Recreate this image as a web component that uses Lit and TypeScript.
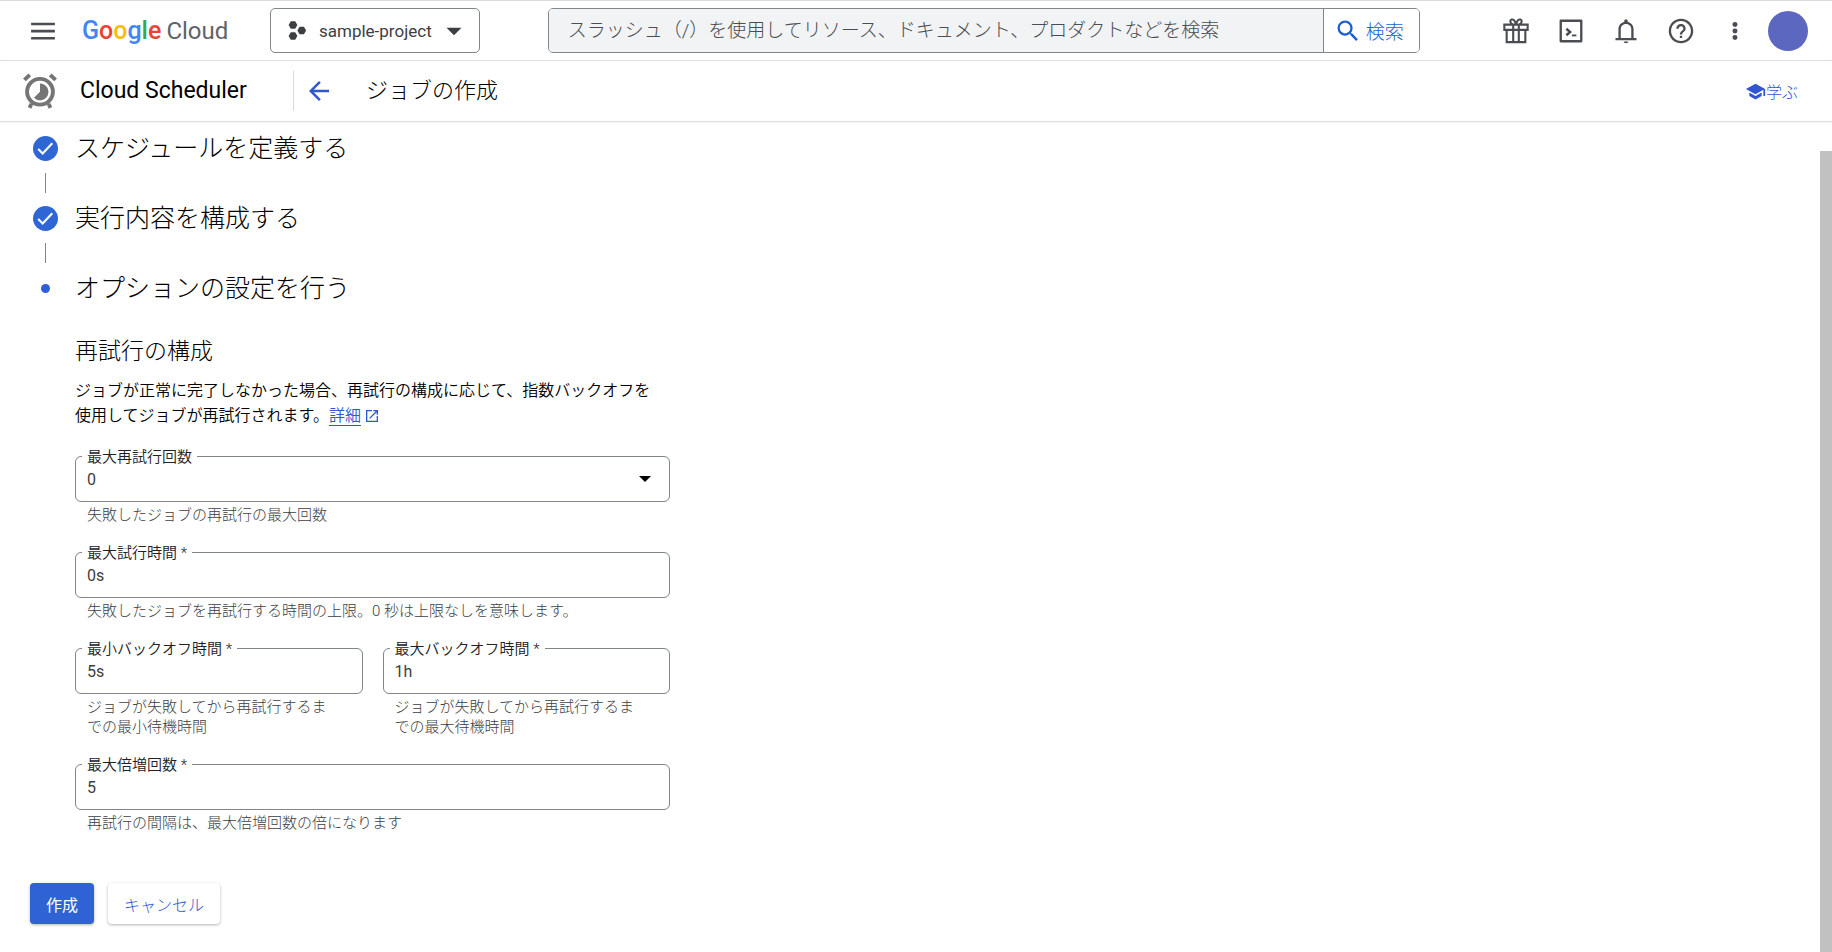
import { LitElement, html, css, svg, nothing } from "lit";
import { customElement, property } from "lit/decorators.js";

const icons = {
  menu: svg`<path d="M2.500 18.800h19v-2.100h-19zm0-5.700h19V11h-19zm0-7.800v2.100h19V5.300z"/>`,
  project: svg`<path d="M5.500 1.500h5l2.500 4.300-2.500 4.200h-5L3 5.800zM5.500 14h5l2.500 4.300-2.500 4.200h-5L3 18.300zM15.500 7.700h5l2.500 4.300-2.500 4.300h-5L13 12z"/>`,
  caret: svg`<path d="M3 8l9 9 9-9z"/>`,
  search: svg`<path d="M15.500 14h-.79l-.28-.27A6.470 6.470 0 0 0 16 9.500 6.500 6.500 0 1 0 9.500 16c1.610 0 3.090-.59 4.230-1.570l.27.28v.79l5 4.990L20.490 19l-4.990-5zm-6 0C7.010 14 5 11.990 5 9.500S7.010 5 9.500 5 14 7.010 14 9.500 11.990 14 9.500 14z"/>`,
  gift: svg`<path fill="none" stroke="currentColor" stroke-width="1.800" d="M2 6.500h20v4.500H2zM4 11v10.500h16V11M9.600 6.500v15M14.400 6.500v15M12 6C11 3 9.500 1.800 8.200 2.200 6.500 2.800 7 5.500 9 6.200M12 6c1-3 2.500-4.200 3.800-3.800C17.500 2.800 17 5.500 15 6.200"/>`,
  shell: svg`<path fill="none" stroke="currentColor" stroke-width="2" stroke-linejoin="round" d="M3.200 3.200h17.600v17.600H3.200z"/><path fill="none" stroke="currentColor" stroke-width="2.200" d="M8 10l3.200 2.800L8 15.600"/><path fill="none" stroke="currentColor" stroke-width="1.600" d="M12.800 15.800h3.800"/>`,
  bell: svg`<path d="M12 22.500c1.100 0 2-.7 2-1.500h-4c0 .8.900 1.500 2 1.500zM18.500 18v-7.500c0-3.200-1.900-5.700-5-6.300V3.500C13.500 2.700 12.800 2 12 2s-1.500.7-1.500 1.500v.7c-3.100.6-5 3.100-5 6.300V18H3v2h18v-2zm-2 0h-9v-7.500C7.500 8 9.200 6 12 6s4.500 2 4.500 4.500z"/>`,
  help: svg`<path d="M11 18h2v-2h-2v2zm1-16.500C6.200 1.500 1.500 6.200 1.500 12S6.200 22.500 12 22.500 22.500 17.800 22.500 12 17.800 1.500 12 1.500zm0 19c-4.700 0-8.500-3.800-8.500-8.500S7.300 3.500 12 3.500s8.500 3.800 8.500 8.500-3.800 8.500-8.500 8.500zM12 6c-2.210 0-4 1.790-4 4h2c0-1.100.9-2 2-2s2 .9 2 2c0 2-3 1.750-3 5h2c0-2.250 3-2.500 3-5 0-2.210-1.790-4-4-4z"/>`,
  more: svg`<circle cx="12" cy="6" r="2.300"/><circle cx="12" cy="12" r="2.300"/><circle cx="12" cy="18" r="2.300"/>`,
  back: svg`<path d="M20 11H7.830l5.590-5.590L12 4l-8 8 8 8 1.410-1.410L7.830 13H20v-2z"/>`,
  school: svg`<path d="M5 13.180v4L12 21l7-3.820v-4L12 17l-7-3.820zM12 3L1 9l11 6 9-4.910V17h2V9L12 3z"/>`,
  scheduler: svg`<g fill="none" stroke="currentColor"><circle cx="12" cy="12.500" r="8.600" stroke-width="2.600"/><path stroke-width="2.600" d="M1.600 4.600L5.200 1.200M22.400 4.600L18.800 1.200M6.300 20.500l-1.300 2.700M17.700 20.500l1.300 2.700"/></g><path d="M12 7v5.500l-4 4A5.600 5.600 0 1 0 12 7z"/>`,
  check: svg`<circle cx="12" cy="12" r="12"/><path fill="none" stroke="#fff" stroke-width="2" d="M5 12.500l4.300 4.300L18.500 7"/>`,
  external: svg`<path d="M19 19H5V5h7V3H3v18h18v-9h-2v7zM14 3v2h3.590l-9.830 9.830 1.410 1.410L19 6.410V10h2V3h-7z"/>`,
};

const icon = (name: keyof typeof icons) =>
  html`<svg class="icon ${name}" viewBox="0 0 24 24" aria-hidden="true">${icons[name]}</svg>`;

const base = css`
  *, *::before, *::after { box-sizing: border-box; }
  .icon { display: block; flex: none; width: 24px; height: 24px; fill: currentColor; }
  button, input, select { font: inherit; color: inherit; margin: 0; }
  button { cursor: pointer; }
`;

@customElement("form-field")
class FormField extends LitElement {
  @property() label = "";
  @property() value = "";
  @property() hint = "";
  @property({ type: Boolean }) required = false;
  @property({ type: Boolean }) dropdown = false;

  static styles = [base, css`
    :host { display: block; min-width: 0; }
    .box { position: relative; display: flex; align-items: center; height: 46px; border: 1px solid #80868b; border-radius: 6px; }
    .label { position: absolute; top: -9px; left: 6px; padding: 0 5px; background: #fff; font-size: 15px; line-height: 18px; font-weight: 350; color: #202124; }
    .control { width: 100%; height: 100%; padding: 0 11px; border: 0; outline: 0; background: transparent; font-size: 16px; color: #3c4043; appearance: none; }
    .arrow { position: absolute; right: 18px; width: 12px; height: 6px; background: #000; clip-path: polygon(0 0, 100% 0, 50% 100%); pointer-events: none; }
    .hint { margin: 0; padding: 3px 32px 0 12px; font-size: 15px; line-height: 20px; font-weight: 300; color: #3c4043; }
  `];

  render() {
    return html`
      <div class="box">
        <label class="label" for="control">${this.label}${this.required ? " *" : nothing}</label>
        ${this.dropdown
          ? html`<select class="control" id="control" aria-describedby="hint"><option>${this.value}</option></select><span class="arrow"></span>`
          : html`<input class="control" id="control" type="text" aria-describedby="hint" .value=${this.value} ?required=${this.required}>`}
      </div>
      <p class="hint" id="hint">${this.hint}</p>
    `;
  }
}

@customElement("app-root")
class AppRoot extends LitElement {
  static styles = [base, css`
    :host {
      display: flex; flex-direction: column; min-height: 100vh; background: #fff; color: #000;
      font-family: Roboto, "Noto Sans CJK JP", sans-serif; font-size: 16px; font-weight: 400;
    }
    .topbar { display: flex; align-items: center; height: 61px; padding: 0 24px 0 28px; border-top: 1px solid #dadce0; border-bottom: 1px solid #dadce0; color: #4a4d51; }
    .plain { display: flex; padding: 0; border: 0; background: none; }
    .menu { width: 30px; height: 30px; }
    .logo { display: flex; align-items: baseline; gap: 5px; margin-left: 24px; width: 188px; font-size: 24px; line-height: 32px; color: #5f6368; text-decoration: none; }
    .brand { font-size: 25px; font-weight: 500; }
    .blue { color: #4285f4; } .red { color: #ea4335; } .yellow { color: #fbbc04; } .green { color: #34a853; }
    .picker { display: flex; align-items: center; height: 45px; padding: 0 15px; border: 1px solid #80868b; border-radius: 5px; background: #fff; font-size: 17px; color: #3c4043; }
    .project { width: 21px; height: 21px; margin-right: 12px; }
    .caret { width: 20px; height: 20px; margin-left: 12px; }
    .search-form { display: flex; flex: 0 1 872px; height: 45px; margin-left: 68px; border: 1px solid #80868b; border-radius: 5px; overflow: hidden; }
    .query { flex: 1; min-width: 0; padding: 0 19px; border: 0; outline: 0; background: #f1f3f4; font-size: 19px; font-weight: 300; }
    .query::placeholder { color: #4a4d51; opacity: 1; }
    .submit { display: flex; align-items: center; gap: 4px; padding: 0 15px 0 10px; border: 0; border-left: 1px solid #80868b; background: #fff; font-size: 19px; font-weight: 300; color: #1a5fd0; }
    .submit .icon { width: 28px; height: 28px; }
    .tools { display: flex; align-items: center; gap: 27px; margin-left: auto; }
    .tools .icon { width: 28px; height: 28px; }
    .tools .more { width: 26px; height: 26px; }
    .avatar { width: 40px; height: 40px; margin-left: -7px; border: 0; border-radius: 50%; background: #5c67c0; }
    .titlebar { display: flex; align-items: center; height: 61px; padding: 0 34px 0 22px; border-bottom: 1px solid #dadce0; box-shadow: 0 1px 2px #f1f3f4; }
    .scheduler { width: 36px; height: 40px; color: #757575; }
    .product { width: 213px; margin: 0 0 0 22px; font-size: 23px; line-height: 32px; font-weight: 400; }
    .rule { width: 1px; height: 40px; background: #dadce0; }
    .backlink, .learn { color: #3056d0; }
    .backlink { margin: 0 32px 0 10px; }
    .back { width: 30px; height: 30px; }
    .title { margin: 0; font-size: 22px; line-height: 32px; font-weight: 300; }
    .learn { display: flex; align-items: center; margin-left: auto; font-size: 16px; font-weight: 300; text-decoration: none; }
    .school { width: 21px; height: 21px; }
    .body { display: flex; flex: 1; }
    .main { flex: 1; min-width: 0; padding: 9px 30px 28px; }
    .scroll { display: flex; flex-direction: column; width: 12px; padding-top: 29px; }
    .thumb { flex: 1; background: #c1c1c1; }
    .steps { margin: 0; padding: 0; list-style: none; }
    .step { display: grid; grid-template-columns: 30px 1fr; column-gap: 15px; align-items: center; }
    .mark { display: flex; justify-content: center; color: #2f66d6; }
    .check { width: 25px; height: 25px; }
    .dot { width: 9px; height: 9px; border-radius: 50%; background: #2f5fd6; }
    .step-title { margin: 0; padding-top: 2px; font-size: 25px; line-height: 32px; font-weight: 300; }
    .line { justify-self: center; width: 1px; height: 20px; margin: 8px 0; background: #80868b; }
    .options { width: min(100%, 640px); padding: 31px 0 0 45px; }
    .heading { margin: 0; font-size: 23px; line-height: 32px; font-weight: 300; }
    .intro { margin: 10px 0 28px; padding-right: 16px; font-size: 16px; line-height: 25px; font-weight: 350; }
    .more-link { color: #3056d0; text-decoration: underline; text-underline-offset: 4px; text-decoration-thickness: 1px; }
    .more-link .icon { display: inline-block; width: 16px; height: 16px; margin-left: 3px; vertical-align: -3px; }
    .fields { display: grid; grid-template-columns: 1fr 1fr; gap: 27px 20px; }
    .wide { grid-column: 1 / -1; }
    .actions { display: flex; gap: 14px; margin-top: 50px; }
    .button { height: 41px; padding: 0 16px; border: 0; border-radius: 4px; font-size: 16px; box-shadow: 0 1px 3px #0000004d; }
    .primary { background: #2f62d4; color: #fff; }
    .secondary { background: #fff; color: #3056d0; font-weight: 300; }
  `];

  render() {
    return html`
      <header class="topbar">
        <button class="plain" aria-label="メニュー">${icon("menu")}</button>
        <a class="logo" href="#"><span class="brand"><span class="blue">G</span><span class="red">o</span><span class="yellow">o</span><span class="blue">g</span><span class="green">l</span><span class="red">e</span></span><span>Cloud</span></a>
        <button class="picker">${icon("project")}sample-project${icon("caret")}</button>
        <form class="search-form" role="search">
          <input class="query" type="search" aria-label="検索" placeholder="スラッシュ（/）を使用してリソース、ドキュメント、プロダクトなどを検索">
          <button class="submit" type="button">${icon("search")}検索</button>
        </form>
        <div class="tools">
          <button class="plain" aria-label="特典">${icon("gift")}</button>
          <button class="plain" aria-label="Cloud Shell">${icon("shell")}</button>
          <button class="plain" aria-label="通知">${icon("bell")}</button>
          <button class="plain" aria-label="ヘルプ">${icon("help")}</button>
          <button class="plain" aria-label="その他">${icon("more")}</button>
          <button class="avatar" aria-label="アカウント"></button>
        </div>
      </header>
      <div class="titlebar">
        ${icon("scheduler")}
        <h2 class="product">Cloud Scheduler</h2>
        <span class="rule"></span>
        <a class="backlink" href="#" aria-label="戻る">${icon("back")}</a>
        <h1 class="title">ジョブの作成</h1>
        <a class="learn" href="#">${icon("school")}学ぶ</a>
      </div>
      <div class="body">
        <main class="main">
          <ol class="steps">
            ${["スケジュールを定義する", "実行内容を構成する"].map((title) => html`
              <li class="step">
                <span class="mark">${icon("check")}</span>
                <h2 class="step-title">${title}</h2>
                <span class="line"></span>
              </li>`)}
            <li class="step">
              <span class="mark"><span class="dot"></span></span>
              <h2 class="step-title">オプションの設定を行う</h2>
            </li>
          </ol>
          <section class="options">
            <h3 class="heading">再試行の構成</h3>
            <p class="intro">ジョブが正常に完了しなかった場合、再試行の構成に応じて、指数バックオフを使用してジョブが再試行されます。<a class="more-link" href="#">詳細${icon("external")}</a></p>
            <div class="fields">
              <form-field class="wide" dropdown label="最大再試行回数" value="0" hint="失敗したジョブの再試行の最大回数"></form-field>
              <form-field class="wide" required label="最大試行時間" value="0s" hint="失敗したジョブを再試行する時間の上限。0 秒は上限なしを意味します。"></form-field>
              <form-field required label="最小バックオフ時間" value="5s" hint="ジョブが失敗してから再試行するまでの最小待機時間"></form-field>
              <form-field required label="最大バックオフ時間" value="1h" hint="ジョブが失敗してから再試行するまでの最大待機時間"></form-field>
              <form-field class="wide" required label="最大倍増回数" value="5" hint="再試行の間隔は、最大倍増回数の倍になります"></form-field>
            </div>
          </section>
          <div class="actions">
            <button class="button primary">作成</button>
            <button class="button secondary">キャンセル</button>
          </div>
        </main>
        <div class="scroll" aria-hidden="true"><div class="thumb"></div></div>
      </div>
    `;
  }
}
